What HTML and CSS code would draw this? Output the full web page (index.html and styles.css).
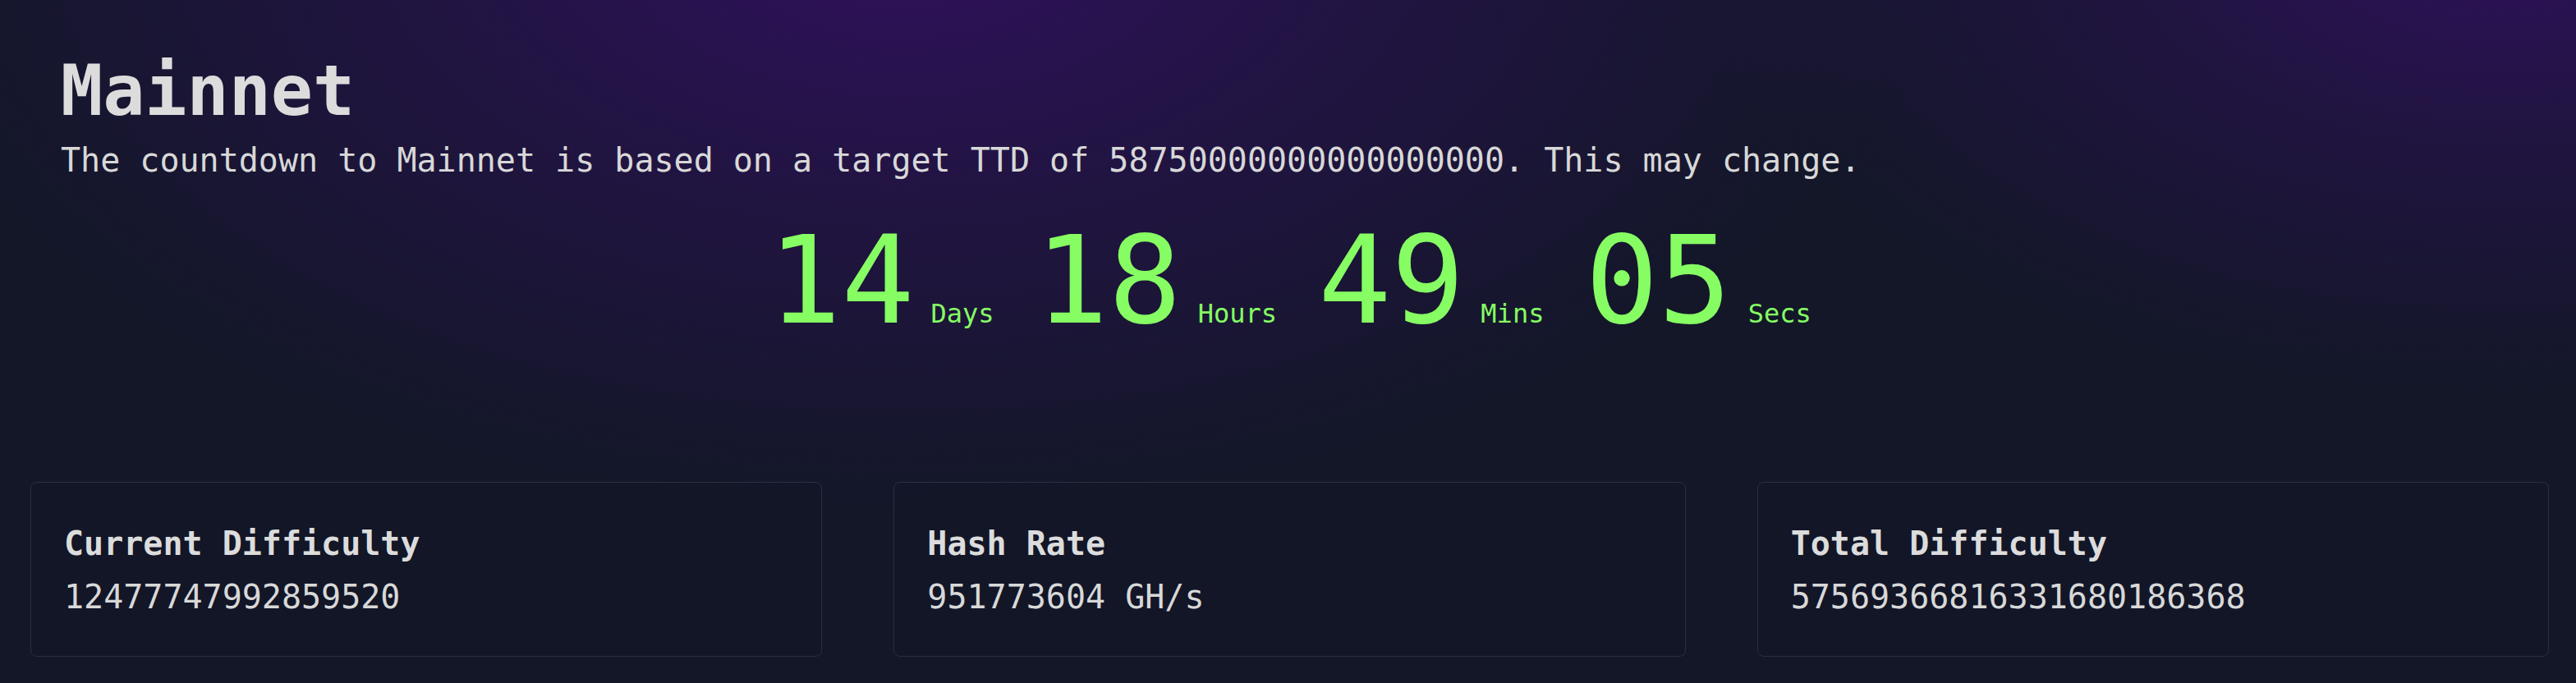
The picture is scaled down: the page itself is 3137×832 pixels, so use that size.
FILE: index.html
```html
<!DOCTYPE html>
<html lang="en">
<head>
<meta charset="utf-8">
<title>Mainnet</title>
<link rel="stylesheet" href="styles.css">
</head>
<body>
<main class="page">
  <header class="intro">
    <h1 class="title">Mainnet</h1>
    <p class="subtitle">The countdown to Mainnet is based on a target TTD of 58750000000000000000. This may change.</p>
  </header>
  <section class="countdown">
    <div class="unit"><span class="num">14</span><span class="label">Days</span></div>
    <div class="unit"><span class="num">18</span><span class="label">Hours</span></div>
    <div class="unit"><span class="num">49</span><span class="label">Mins</span></div>
    <div class="unit"><span class="num">05</span><span class="label">Secs</span></div>
  </section>
  <section class="stats">
    <div class="card">
      <div class="card-title">Current Difficulty</div>
      <div class="card-value">12477747992859520</div>
    </div>
    <div class="card">
      <div class="card-title">Hash Rate</div>
      <div class="card-value">951773604 GH/s</div>
    </div>
    <div class="card">
      <div class="card-title">Total Difficulty</div>
      <div class="card-value">57569366816331680186368</div>
    </div>
  </section>
</main>
</body>
</html>
```

FILE: styles.css
```css
html, body {
  margin: 0;
  padding: 0;
}
body {
  width: 3137px;
  height: 832px;
  overflow: hidden;
  background-color: #131728;
  background-image:
    radial-gradient(ellipse 1250px 700px at 1100px -80px, rgba(50, 17, 96, 0.95) 0%, rgba(45, 17, 88, 0.55) 45%, rgba(40, 17, 80, 0) 100%),
    radial-gradient(ellipse 1000px 560px at 3050px -80px, rgba(50, 17, 96, 0.9) 0%, rgba(45, 17, 88, 0.5) 45%, rgba(40, 17, 80, 0) 100%);
  font-family: "DejaVu Sans Mono", "Liberation Mono", monospace;
  color: #dadada;
}
.page {
  display: flex;
  flex-direction: column;
  padding: 0 33px 0 37px;
}
.intro {
  padding: 68px 0 0 37px;
}
.title {
  margin: 0;
  font-size: 85px;
  line-height: 85px;
  font-weight: bold;
  color: #dcdcdc;
}
.subtitle {
  margin: 18px 0 0 0;
  font-size: 40px;
  line-height: 48px;
  color: #d8d8d8;
}
.countdown {
  display: flex;
  justify-content: center;
  align-items: baseline;
  gap: 50px;
  margin-top: 49px;
  color: #86fd63;
}
.unit {
  display: flex;
  align-items: baseline;
  gap: 20px;
}
.num {
  font-size: 148px;
  line-height: 148px;
}
.label {
  font-size: 32px;
  line-height: 40px;
}
.stats {
  display: grid;
  grid-template-columns: repeat(3, 1fr);
  gap: 87px;
  margin-top: 171px;
}
.card {
  border: 1px solid #2c2e40;
  border-radius: 8px;
  background: rgba(18, 22, 38, 0.55);
  padding: 46px 40px 44px 40px;
  display: flex;
  flex-direction: column;
  gap: 9px;
}
.card-title {
  font-size: 40px;
  line-height: 56px;
  font-weight: bold;
  color: #dcdcdc;
}
.card-value {
  font-size: 40px;
  line-height: 56px;
  color: #d8d8d8;
}
```
